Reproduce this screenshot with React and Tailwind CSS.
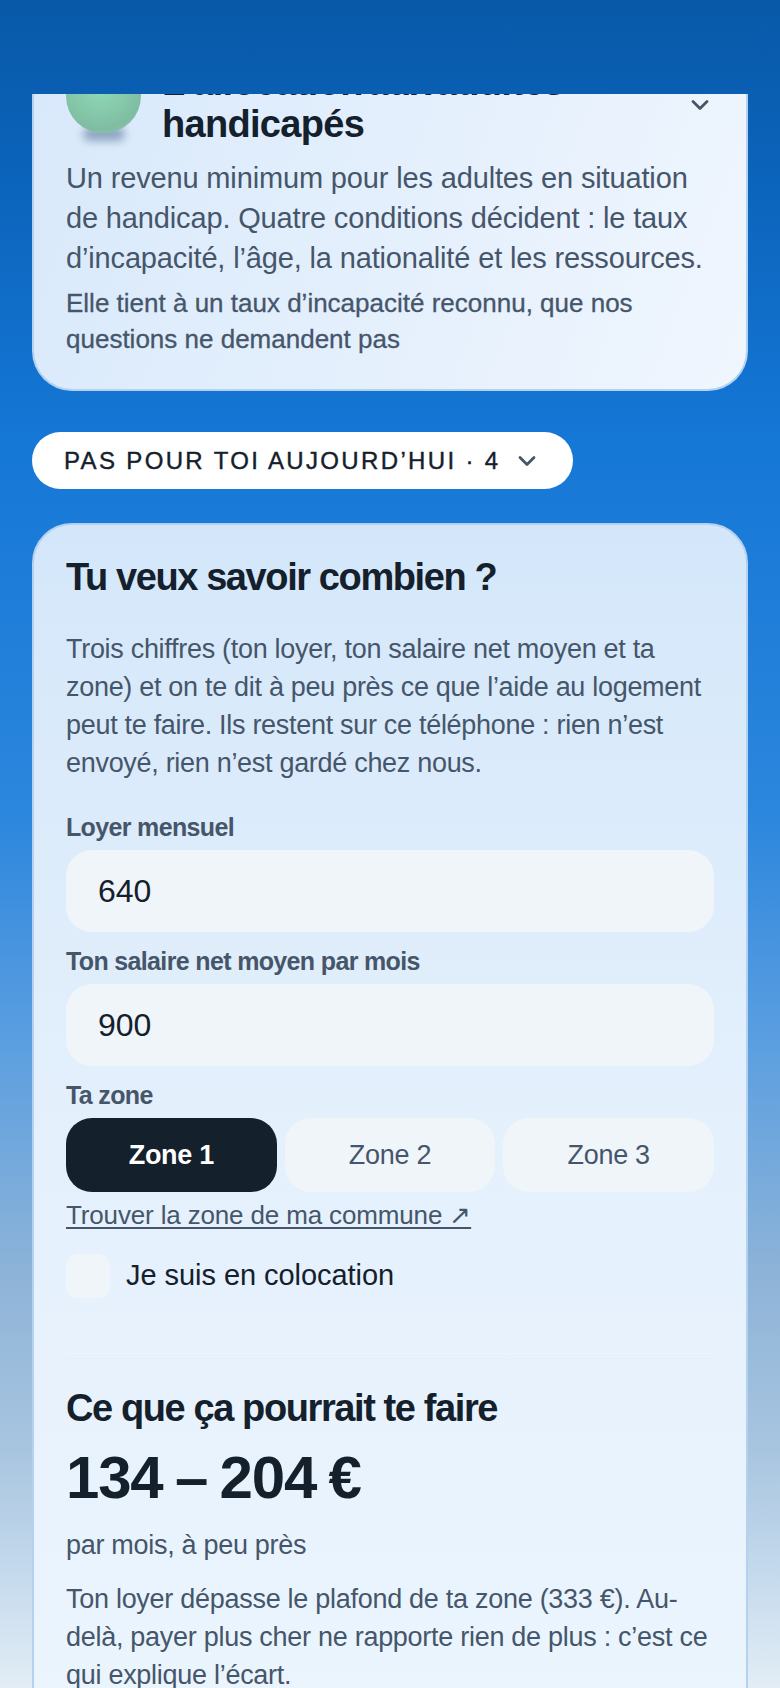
const FONT = 'font-["Liberation_Sans",Arial,sans-serif]'

const Chevron = ({ className }) => (
  <svg className={className} viewBox="0 0 24 24" fill="none" stroke="currentColor" strokeWidth="2.4" strokeLinecap="round" strokeLinejoin="round">
    <path d="M6 9l6 6 6-6" />
  </svg>
)

const Field = ({ label, value }) => (
  <div>
    <p className="text-[25px] leading-[36px] font-bold tracking-[-0.65px] text-[#46566a]">{label}</p>
    <div className="mt-[5px] flex h-[82px] items-center rounded-[26px] bg-[#f0f5fa] px-[32px] text-[32px] text-[#14202c]">
      {value}
    </div>
  </div>
)

const ZoneButton = ({ label, active }) => (
  <div className={active
    ? 'flex h-[74px] items-center justify-center rounded-[26px] bg-[#14202c] text-[27px] font-bold tracking-[-0.3px] text-white'
    : 'flex h-[74px] items-center justify-center rounded-[26px] bg-[#f0f5fa] text-[27px] tracking-[-0.3px] text-[#46566a]'}>
    {label}
  </div>
)

export default function App() {
  return (
    <div className={`${FONT} flex h-[1688px] flex-col overflow-hidden bg-[linear-gradient(180deg,#0859a8_0%,#0b63ba_10%,#1577d6_26%,#2b86dd_48%,#5c9fe0_62%,#8fb4d8_76%,#a8c5e0_86%,#c4d9ec_93%,#e2edf6_100%)]`}>
      <div className="h-[94px] shrink-0" />
      <main className="min-h-0 flex-1 overflow-hidden px-[32px]">
        <section className="-mt-[35px] rounded-b-[40px] border-x-2 border-b-2 border-[#b4d2f0] bg-[linear-gradient(110deg,#d8e9fb,#f0f6fe)] px-[32px] pb-[32px]">
          <div className="flex gap-[21px]">
            <div className="relative h-[84px] w-[75px] shrink-0">
              <div className="absolute left-[17px] top-[68px] h-[14px] w-[42px] rounded-full bg-[#8ea4c0] blur-[4px]" />
              <div className="absolute left-0 top-0 h-[74px] w-[75px] rounded-full bg-[radial-gradient(circle_at_45%_35%,#90dcb8,#7fbda2_70%,#9cc4b8)]" />
            </div>
            <h2 className="mt-[2px] flex-1 text-[38px] leading-[42px] font-bold tracking-[-0.7px] [word-spacing:-5px] text-[#14202c]">
              L’allocation aux adultes handicapés
            </h2>
            <Chevron className="mt-[32px] h-[28px] w-[28px] shrink-0 text-[#46566a]" />
          </div>
          <p className="mt-[13px] text-[29px] leading-[40px] tracking-[-0.15px] text-[#46566a]">
            Un revenu minimum pour les adultes en situation de handicap. Quatre conditions décident : le taux d’incapacité, l’âge, la nationalité et les ressources.
          </p>
          <p className="mt-[7px] text-[26px] leading-[36px] tracking-[0px] text-[#46566a] [-webkit-text-stroke:0.3px_#46566a]">
            Elle tient à un taux d’incapacité reconnu, que nos questions ne demandent pas
          </p>
        </section>

        <button className="mt-[41px] flex h-[57px] items-center gap-[12px] rounded-full bg-white pl-[32px] pr-[32px] text-[24px] tracking-[2.35px] text-[#14202c] [-webkit-text-stroke:0.4px_#14202c]">
          PAS POUR TOI AUJOURD’HUI · 4
          <Chevron className="h-[28px] w-[28px] text-[#46566a]" />
        </button>

        <section className="mt-[34px] rounded-[40px] border-2 border-[#b4d2f0] bg-[linear-gradient(180deg,#d4e7fa,#e4f0fc_50%,#ebf5fe)] px-[32px] pb-[40px] pt-[29px]">
          <h2 className="text-[38px] leading-[46px] font-bold tracking-[-1.4px] text-[#14202c]">Tu veux savoir combien ?</h2>
          <p className="mt-[30px] text-[27px] leading-[38px] tracking-[-0.3px] text-[#46566a]">
            Trois chiffres (ton loyer, ton salaire net moyen et ta zone) et on te dit à peu près ce que l’aide au logement peut te faire. Ils restent sur ce téléphone : rien n’est envoyé, rien n’est gardé chez nous.
          </p>
          <div className="mt-[27px] flex flex-col gap-[11px]">
            <Field label="Loyer mensuel" value="640" />
            <Field label="Ton salaire net moyen par mois" value="900" />
          </div>
          <p className="mt-[11px] text-[25px] leading-[36px] font-bold tracking-[-0.65px] text-[#46566a]">Ta zone</p>
          <div className="mt-[5px] grid grid-cols-3 gap-[8px]">
            <ZoneButton label="Zone 1" active />
            <ZoneButton label="Zone 2" />
            <ZoneButton label="Zone 3" />
          </div>
          <a className="mt-[5px] block text-[26px] leading-[36px] tracking-[-0.15px] text-[#46566a] underline decoration-[1.5px] underline-offset-[3px]">Trouver la zone de ma commune ↗</a>
          <label className="mt-[21px] flex items-center gap-[16px] text-[29px] tracking-[-0.05px] text-[#14202c]">
            <span className="h-[44px] w-[44px] rounded-[12px] bg-[#f0f5fa]" />
            Je suis en colocation
          </label>
          <hr className="mt-[55px] border-[#eef6fd]" />
          <h3 className="mt-[31px] text-[38px] leading-[46px] font-bold tracking-[-1.4px] text-[#14202c]">Ce que ça pourrait te faire</h3>
          <p className="mt-[14px] text-[60px] leading-[66px] font-bold tracking-[-1.2px] [word-spacing:-3px] text-[#14202c]">134 – 204 €</p>
          <p className="mt-[15px] text-[27px] leading-[38px] tracking-[-0.3px] text-[#46566a]">par mois, à peu près</p>
          <p className="mt-[16px] text-[27px] leading-[38px] tracking-[-0.28px] text-[#46566a]">
            Ton loyer dépasse le plafond de ta zone (333 €). Au-delà, payer plus cher ne rapporte rien de plus : c’est ce qui explique l’écart.
          </p>
        </section>
      </main>
    </div>
  )
}
